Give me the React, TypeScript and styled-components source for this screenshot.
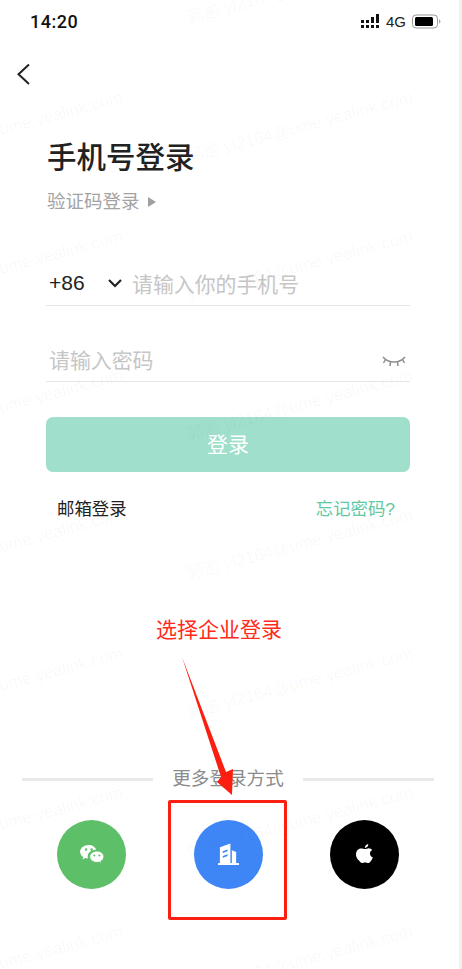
import React from 'react';
import styled, { createGlobalStyle } from 'styled-components';

const CJK = `"Liberation Sans", "Noto Sans CJK SC", sans-serif`;

const GlobalStyle = createGlobalStyle`
  html, body {
    margin: 0;
    padding: 0;
    background: #fff;
  }
  body {
    font-family: ${CJK};
  }
`;

const Page = styled('div')`
  position: relative;
  width: 462px;
  height: 969px;
  overflow: hidden;
  background: #fff;
  box-sizing: border-box;
  border-right: 3px solid #f1f1f1;
`;

const StatusBar = styled('div')`
  display: flex;
  align-items: center;
  justify-content: space-between;
  height: 42px;
  margin-bottom: 2px;
  padding: 0 18px 0 30px;
`;

const Time = styled('span')`
  font-family: Roboto, sans-serif;
  font-size: 18px;
  font-weight: 500;
  letter-spacing: 0.5px;
  color: #111;
`;

const StatusIcons = styled('div')`
  display: flex;
  align-items: center;
  gap: 6px;
`;

const NetworkLabel = styled('span')`
  font-size: 15px;
  color: #222;
`;

const Nav = styled('div')`
  display: flex;
  align-items: center;
  height: 60px;
  padding-left: 16px;
`;

const Form = styled('div')`
  padding: 32px 49px 0 46px;
`;

const Title = styled('h1')`
  margin: 0 0 0 1px;
  font-size: 29.5px;
  line-height: 44px;
  font-weight: 500;
  color: #222;
`;

const SubLink = styled('div')`
  display: flex;
  align-items: center;
  gap: 8px;
  margin: 8px 0 0 1px;
  font-size: 18.5px;
  line-height: 28px;
  color: #a3a3a3;
`;

const Triangle = styled('span')`
  width: 0;
  height: 0;
  border-left: 8px solid #a0a0a0;
  border-top: 5px solid transparent;
  border-bottom: 5px solid transparent;
`;

const Field = styled('div')<{ $gap: number }>`
  display: flex;
  align-items: center;
  height: 44px;
  margin-top: ${p => p.$gap}px;
  border-bottom: 1px solid #e6e6e6;
`;

const CountryCode = styled('span')`
  width: 58px;
  padding-left: 3px;
  font-size: 21px;
  color: #222;
`;

const Chevron = styled('svg')`
  width: 16px;
  height: 10px;
  margin-right: 9px;
`;

const Placeholder = styled('span')<{ $inset?: number }>`
  flex: 1;
  margin-left: ${p => p.$inset ?? 0}px;
  font-size: 20.9px;
  color: #c6c6c6;
`;

const EyeIcon = styled('svg')`
  margin: 6px 3px 0 0;
`;

const LoginButton = styled('div')`
  display: flex;
  align-items: center;
  justify-content: center;
  box-sizing: border-box;
  height: 55px;
  margin-top: 35px;
  padding-bottom: 3px;
  border-radius: 7px;
  background: #9fdfcb;
  font-size: 21px;
  color: #fff;
`;

const LinkRow = styled('div')`
  display: flex;
  justify-content: space-between;
  margin-top: 24px;
  padding: 0 15px 0 11px;
  font-size: 17.4px;
  line-height: 26px;
`;

const EmailLink = styled('span')`
  color: #222;
`;

const ForgotLink = styled('span')`
  color: #62c8a4;
`;

const Divider = styled('div')`
  display: flex;
  align-items: center;
  gap: 19px;
  margin: 243px 25px 0 22px;
  font-size: 18.6px;
  line-height: 28px;
  color: #8b8b8b;
`;

const DividerLine = styled('span')`
  flex: 1;
  height: 3px;
  background: #e9e9e9;
`;

const Providers = styled('div')`
  display: flex;
  justify-content: space-between;
  margin: 27px 60px 0 57px;
`;

const Provider = styled('div')<{ $bg: string }>`
  display: flex;
  align-items: center;
  justify-content: center;
  width: 69px;
  height: 69px;
  border-radius: 50%;
  background: ${p => p.$bg};
`;

const Watermarks = styled('div')`
  position: absolute;
  top: -54px;
  left: -96px;
  display: grid;
  grid-template-columns: repeat(3, 290px);
  grid-auto-rows: 139px;
  pointer-events: none;
`;

const Watermark = styled('span')`
  display: block;
  width: 290px;
  margin-top: 60px;
  font-size: 17px;
  line-height: 24px;
  white-space: nowrap;
  color: rgba(60, 60, 60, 0.035);
  transform: rotate(-15deg);
  transform-origin: left center;
`;

const Annotation = styled('div')`
  position: absolute;
  top: 615px;
  left: 156px;
  font-size: 21px;
  line-height: 30px;
  color: #ff2a1a;
`;

const Highlight = styled('div')`
  position: absolute;
  top: 800px;
  left: 168px;
  width: 119px;
  height: 120px;
  box-sizing: border-box;
  border: 3px solid #fb1f12;
  border-radius: 2px;
`;

const Arrow = styled('svg')`
  position: absolute;
  top: 650px;
  left: 170px;
`;

export default function App() {
  const marks = Array.from({ length: 24 }, (_, i) => i);
  return (
    <>
      <GlobalStyle />
      <Page>
        <StatusBar>
          <Time>14:20</Time>
          <StatusIcons>
            <svg width="20" height="16" viewBox="0 0 20 16" fill="#111">
              <rect x="1" y="7" width="3" height="3" />
              <rect x="1" y="12" width="3" height="3" />
              <rect x="6" y="7" width="3" height="3" />
              <rect x="6" y="12" width="3" height="3" />
              <rect x="11" y="4" width="3" height="6" />
              <rect x="11" y="12" width="3" height="3" />
              <rect x="16" y="1" width="3" height="9" />
              <rect x="16" y="12" width="3" height="3" />
            </svg>
            <NetworkLabel>4G</NetworkLabel>
            <svg width="29" height="15" viewBox="0 0 29 15">
              <rect x="0.5" y="1" width="25" height="13" rx="3.5" fill="none" stroke="#999" />
              <rect x="3" y="3" width="18" height="9" rx="1.5" fill="#000" />
              <path d="M27 5.5c1 .4 1.500 1.200 1.500 2s-.5 1.600-1.500 2z" fill="#aaa" />
            </svg>
          </StatusIcons>
        </StatusBar>
        <Nav>
          <svg width="16" height="24" viewBox="0 0 16 24" fill="none">
            <path d="M13 2.500 2.500 12.300 13 22" stroke="#222" strokeWidth="2" />
          </svg>
        </Nav>
        <Form>
          <Title>手机号登录</Title>
          <SubLink>
            验证码登录
            <Triangle />
          </SubLink>
          <Field $gap={45}>
            <CountryCode>+86</CountryCode>
            <Chevron viewBox="0 0 16 10" fill="none">
              <path d="M2 2l6 6 6-6" stroke="#222" strokeWidth="2.200" />
            </Chevron>
            <Placeholder>请输入你的手机号</Placeholder>
          </Field>
          <Field $gap={31}>
            <Placeholder $inset={3}>请输入密码</Placeholder>
            <EyeIcon width="26" height="16" viewBox="0 0 26 16" fill="none" stroke="#8d8d8d" strokeWidth="1.500">
              <path d="M2 3c3 3.500 6.500 5 11 5s8-1.500 11-5" />
              <path d="M4.500 5.500 2.500 9M9.500 8l-.5 4M16.500 8l.5 4M21.500 5.500l2 3.500" />
            </EyeIcon>
          </Field>
          <LoginButton>登录</LoginButton>
          <LinkRow>
            <EmailLink>邮箱登录</EmailLink>
            <ForgotLink>忘记密码?</ForgotLink>
          </LinkRow>
        </Form>
        <Divider>
          <DividerLine />
          更多登录方式
          <DividerLine />
        </Divider>
        <Providers>
          <Provider $bg="#5dbf68">
            <svg width="26" height="21" viewBox="0 0 28 23" fill="#fff">
              <path d="M10.500 1C5 1 1 4.400 1 8.500c0 2.400 1.300 4.400 3.400 5.800L3.600 17l3-1.600c1 .3 2 .5 3.100.5-.3-.8-.4-1.500-.4-2.300 0-4 3.800-7.200 8.700-7.200h.8C17.700 3.300 14.400 1 10.500 1z" />
              <path d="M27 14c0-3.500-3.500-6.200-7.700-6.200S11.500 10.500 11.500 14s3.500 6.200 7.800 6.200c.9 0 1.800-.1 2.600-.4l2.500 1.500-.7-2.400c2.100-1.200 3.300-2.800 3.300-4.900z" stroke="#5dbf68" strokeWidth="1" />
              <circle cx="7.500" cy="6" r="1.300" fill="#5dbf68" />
              <circle cx="13.500" cy="6" r="1.300" fill="#5dbf68" />
              <circle cx="16.500" cy="12.500" r="1.100" fill="#5dbf68" />
              <circle cx="22" cy="12.500" r="1.100" fill="#5dbf68" />
            </svg>
          </Provider>
          <Provider $bg="#3e86f5">
            <svg width="21" height="23" viewBox="0 0 22 23" fill="#fff">
              <path d="M2 21V4L13 0v21zM14.500 21V7L19 9v12z" />
              <rect x="0" y="20.500" width="22" height="2" />
              <path d="M5 8l5-1.800v2L5 10zM5 13l5-1.800v2L5 15z" fill="#3e86f5" />
            </svg>
          </Provider>
          <Provider $bg="#000">
            <svg width="17" height="21" viewBox="0 0 17 21" fill="#fff">
              <path d="M9 5c1.300 0 2.500-.8 3.600-.8 1.500 0 2.800.7 3.600 1.900-1.500.9-2.300 2.100-2.200 3.700.1 1.700 1 2.900 2.800 3.600-.5 1.300-1.100 2.500-1.900 3.600-.8 1.100-1.600 2.100-2.800 2.100-1.100 0-1.600-.7-3-.7s-2 .7-3 .7c-1.200 0-2.100-1.100-2.900-2.300C.7 14.500 0 12.300 0 10.400 0 7 2.200 4.400 5 4.400 6.600 4.400 7.700 5 9 5z" />
              <path d="M8.800 4c0-2 1.400-3.600 3.500-4 .1 2.200-1.400 3.800-3.500 4z" />
            </svg>
          </Provider>
        </Providers>
        <Watermarks>
          {marks.map(i => (
            <Watermark key={i}>郭逾 yl2164@ume.yealink.com</Watermark>
          ))}
        </Watermarks>
        <Annotation>选择企业登录</Annotation>
        <Arrow width="90" height="155" viewBox="0 0 90 155" fill="#fb1f12">
          <path d="M12 7 56 122 63 119 62 145 47 132 51 127z" />
        </Arrow>
        <Highlight />
      </Page>
    </>
  );
}
